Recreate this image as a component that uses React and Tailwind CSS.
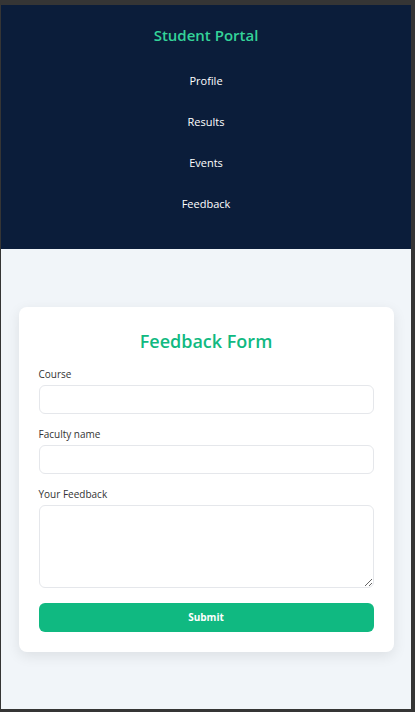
const navLinks = ['Profile', 'Results', 'Events', 'Feedback'];

const Field = ({ label, children }) => (
  <div className="flex flex-col">
    <label className="text-[10px] leading-[15px] text-[#333333] mb-[3px]">{label}</label>
    {children}
  </div>
);

const App = () => {
  return (
    <div
      className="min-h-[712px] bg-[#353535] pt-[5px] pl-[1px] pr-[4px] pb-[3px] flex"
      style={{ fontFamily: '"Open Sans", "Noto Sans", sans-serif' }}
    >
      <div className="flex-1 flex flex-col bg-[#f1f5f9]">
        {/* Sidebar / header */}
        <header className="bg-[#0b1d3a] pt-[18px] pb-[25px] flex flex-col items-center">
          <h1 className="text-[15px] leading-6 font-semibold text-[#34d399]">Student Portal</h1>
          <nav className="mt-[13px] flex flex-col items-center w-full">
            {navLinks.map(link => (
              <a key={link} href="#" className="block py-3 text-[11px] leading-[17px] text-white">
                {link}
              </a>
            ))}
          </nav>
        </header>

        {/* Feedback form */}
        <main className="flex-1 flex items-center justify-center px-[17px] py-[57px]">
          <form
            className="w-[375px] bg-white rounded-lg shadow-[0_4px_14px_rgba(0,0,0,0.09)] px-5 pt-5 pb-5 flex flex-col"
            onSubmit={e => e.preventDefault()}
          >
            <h2 className="text-center text-[18px] leading-7 font-semibold text-[#10b981] mb-[12px]">
              Feedback Form
            </h2>
            <div className="flex flex-col gap-[13px]">
              <Field label="Course">
                <input type="text" className="h-[29px] rounded-md border border-[#e5e7eb] px-2 text-[11px] outline-none" />
              </Field>
              <Field label="Faculty name">
                <input type="text" className="h-[29px] rounded-md border border-[#e5e7eb] px-2 text-[11px] outline-none" />
              </Field>
              <Field label="Your Feedback">
                <textarea className="h-[83px] rounded-md border border-[#e5e7eb] px-2 py-1 text-[11px] outline-none" />
              </Field>
            </div>
            <button
              type="submit"
              className="mt-[15px] h-[29px] rounded-md bg-[#10b981] text-white text-[10px] font-bold"
            >
              Submit
            </button>
          </form>
        </main>
      </div>
    </div>
  );
};

export default App;
